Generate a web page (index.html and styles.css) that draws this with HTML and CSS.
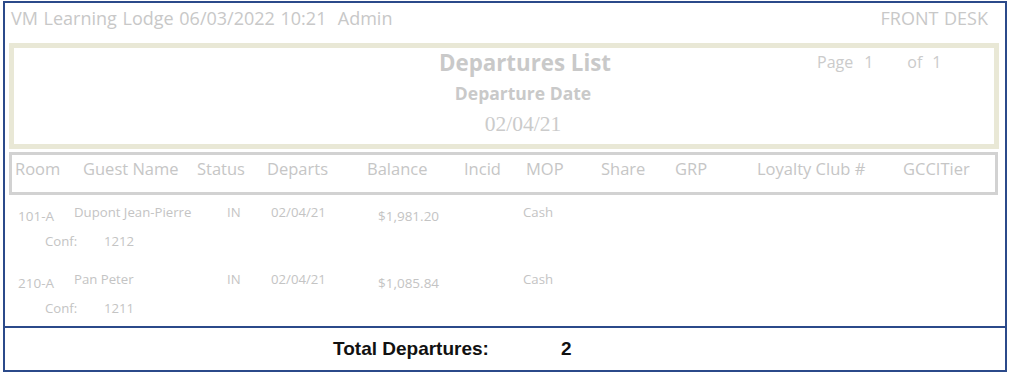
FILE: index.html
```html
<!DOCTYPE html>
<html>
<head>
<meta charset="utf-8">
<link rel="stylesheet" href="styles.css">
</head>
<body>
<div class="page">
  <div class="report">
    <div class="topbar">
      <span>VM Learning Lodge 06/03/2022 10:21&nbsp; Admin</span>
      <span>FRONT DESK</span>
    </div>
    <div class="banner">
      <div class="banner-center">
        <div class="title">Departures List</div>
        <div class="subtitle">Departure Date</div>
        <div class="date">02/04/21</div>
      </div>
      <div class="pageinfo">
        <span class="pg-label">Page</span><span class="pg-num">1</span>
        <span class="pg-of">of</span><span class="pg-tot">1</span>
      </div>
    </div>
    <div class="colhead">
      <span class="h-room">Room</span>
      <span class="h-guest">Guest Name</span>
      <span class="h-status">Status</span>
      <span class="h-departs">Departs</span>
      <span class="h-balance">Balance</span>
      <span class="h-incid">Incid</span>
      <span class="h-mop">MOP</span>
      <span class="h-share">Share</span>
      <span class="h-grp">GRP</span>
      <span class="h-loyalty">Loyalty Club #</span>
      <span class="h-tier">GCCITier</span>
    </div>
    <div class="rows">
      <div class="entry">
        <div class="line">
          <span class="c-room low">101-A</span>
          <span class="c-guest">Dupont Jean-Pierre</span>
          <span class="c-status">IN</span>
          <span class="c-departs">02/04/21</span>
          <span class="c-balance low">$1,981.20</span>
          <span class="c-mop">Cash</span>
        </div>
        <div class="conf"><span class="conf-label">Conf:</span><span>1212</span></div>
      </div>
      <div class="entry">
        <div class="line">
          <span class="c-room low">210-A</span>
          <span class="c-guest">Pan Peter</span>
          <span class="c-status">IN</span>
          <span class="c-departs">02/04/21</span>
          <span class="c-balance low">$1,085.84</span>
          <span class="c-mop">Cash</span>
        </div>
        <div class="conf"><span class="conf-label">Conf:</span><span>1211</span></div>
      </div>
    </div>
  </div>
  <div class="footer">
    <span class="total-label">Total Departures:</span>
    <span class="total-num">2</span>
  </div>
</div>
</body>
</html>
```

FILE: styles.css
```css
* { box-sizing: border-box; }
html, body { margin: 0; padding: 0; background: #ffffff; }
body { font-family: "Open Sans", "DejaVu Sans", sans-serif; }

.page {
  margin: 1px 0 0 3px;
  width: 1004px;
  height: 371px;
  border: 2px solid #2b4a8a;
  display: flex;
  flex-direction: column;
}

.report {
  flex: 1;
  min-height: 0;
  overflow: hidden;
  color: #c6c6c6;
}

.topbar {
  height: 38px;
  display: flex;
  justify-content: space-between;
  padding: 3px 17px 0 6px;
  font-size: 18px;
  word-spacing: 1px;
  line-height: 24px;
  color: #c8c8c8;
}

.banner {
  margin: 2px 6px 0 4px;
  height: 106px;
  border: 5px solid #e9e8d6;
  display: flex;
}

.banner-center {
  width: 200px;
  margin-left: 409px;
  text-align: center;
  font-weight: bold;
}
.title { font-size: 22.3px; line-height: 26px; margin-top: 2px; color: #c9c9c9; padding-left: 4px; }
.subtitle { font-size: 17.5px; line-height: 22px; margin-top: 6px; color: #c9c9c9; }
.date {
  font-family: "Liberation Serif", serif;
  font-weight: normal;
  font-size: 21.5px;
  line-height: 24px;
  margin-top: 8px;
  color: #cbcbcb;
}

.pageinfo {
  margin-left: 194px;
  margin-top: 2px;
  font-size: 16px;
  line-height: 24px;
  color: #cbcbcb;
  display: flex;
  align-items: flex-start;
}
.pg-num { margin-left: 11px; }
.pg-of { margin-left: 34px; }
.pg-tot { margin-left: 10px; }

.colhead {
  margin: 3px 7px 0 4px;
  height: 43px;
  border: 3px solid #d2d2d2;
  display: flex;
  align-items: center;
  padding: 0 0 10px 3px;
  font-size: 16.5px;
  color: #c6c6c6;
}
.colhead span { flex: none; }
.h-room { width: 68px; }
.h-guest { width: 114px; }
.h-status { width: 70px; }
.h-departs { width: 100px; }
.h-balance { width: 97px; }
.h-incid { width: 62px; }
.h-mop { width: 75px; }
.h-share { width: 74px; }
.h-grp { width: 82px; }
.h-loyalty { width: 146px; }

.rows {
  padding: 9px 0 0 13px;
  font-family: "Open Sans", "DejaVu Sans", sans-serif;
  font-size: 13.2px;
  color: #c4c4c4;
}
.entry { height: 67px; }
.line { display: flex; align-items: flex-start; height: 22px; line-height: 16px; }
.line span { flex: none; }
.low { padding-top: 4px; font-size: 13.5px; }
.c-room { width: 56px; }
.c-guest { width: 153px; }
.c-status { width: 44px; }
.c-departs { width: 107px; }
.c-balance { width: 145px; }

.conf { display: flex; padding-left: 27px; margin-top: 7px; line-height: 16px; }
.conf-label { width: 59px; }

.footer {
  height: 44px;
  flex: none;
  border-top: 2px solid #2b4a8a;
  display: flex;
  align-items: center;
  padding: 0 0 0 328px;
  font-family: "Liberation Sans", Arial, sans-serif;
  font-weight: bold;
  font-size: 19px;
  color: #111111;
}
.total-label { width: 228px; }
```
